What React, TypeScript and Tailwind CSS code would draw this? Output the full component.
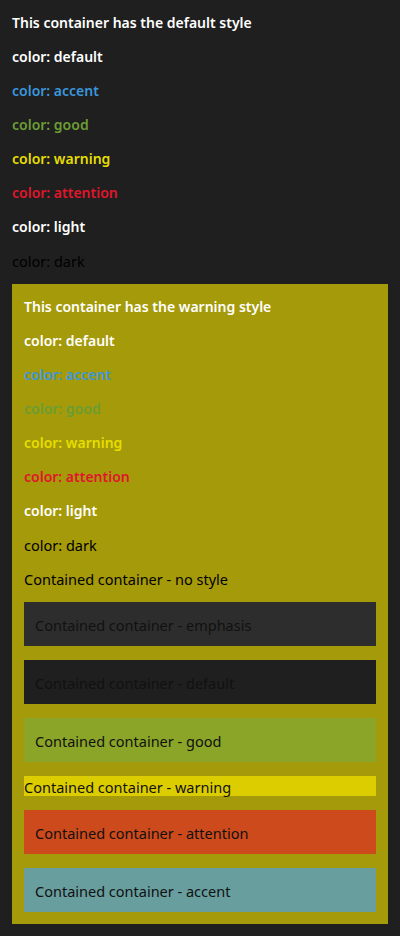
const font = "font-['Segoe_UI','Noto_Sans',sans-serif]";

const colorLines = [
  { label: "color: default", cls: "text-white font-semibold" },
  { label: "color: accent", cls: "text-[#3a96dd] font-semibold" },
  { label: "color: good", cls: "text-[#6b9d34] font-semibold" },
  { label: "color: warning", cls: "text-[#e6de00] font-semibold" },
  { label: "color: attention", cls: "text-[#e0162b] font-semibold" },
  { label: "color: light", cls: "text-white font-semibold" },
  { label: "color: dark", cls: "text-[#000000] font-normal text-[14.5px]" },
];

const boxes = [
  { label: "Contained container - emphasis", cls: "bg-[#2d2d2d] px-[11px] py-3" },
  { label: "Contained container - default", cls: "bg-[#1f1f1f] px-[11px] py-3" },
  { label: "Contained container - good", cls: "bg-[#8aa527] px-[11px] py-3" },
  { label: "Contained container - warning", cls: "bg-[#dccd00]" },
  { label: "Contained container - attention", cls: "bg-[#cc4a1b] px-[11px] py-3" },
  { label: "Contained container - accent", cls: "bg-[#689e9e] px-[11px] py-3" },
];

function Line({ text, className }: { text: string; className: string }) {
  return <div className={`h-5 leading-[22px] text-sm whitespace-nowrap ${className}`}>{text}</div>;
}

export default function App() {
  return (
    <div className={`w-[400px] h-[936px] bg-[#1f1f1f] p-3 flex flex-col gap-[14px] ${font}`}>
      <Line text="This container has the default style" className="text-white font-semibold" />
      {colorLines.map(l => (
        <Line key={l.label} text={l.label} className={l.cls} />
      ))}

      {/* warning styled container */}
      <div className="bg-[#a59a09] p-3 flex flex-col gap-[14px]">
        <Line text="This container has the warning style" className="text-white font-semibold" />
        {colorLines.map(l => (
          <Line key={l.label} text={l.label} className={l.cls} />
        ))}
        <Line text="Contained container - no style" className="text-black text-[14.5px]" />
        {boxes.map(b => (
          <div key={b.label} className={b.cls}>
            <Line text={b.label} className="text-[#111] text-[14.5px]" />
          </div>
        ))}
      </div>
    </div>
  );
}
